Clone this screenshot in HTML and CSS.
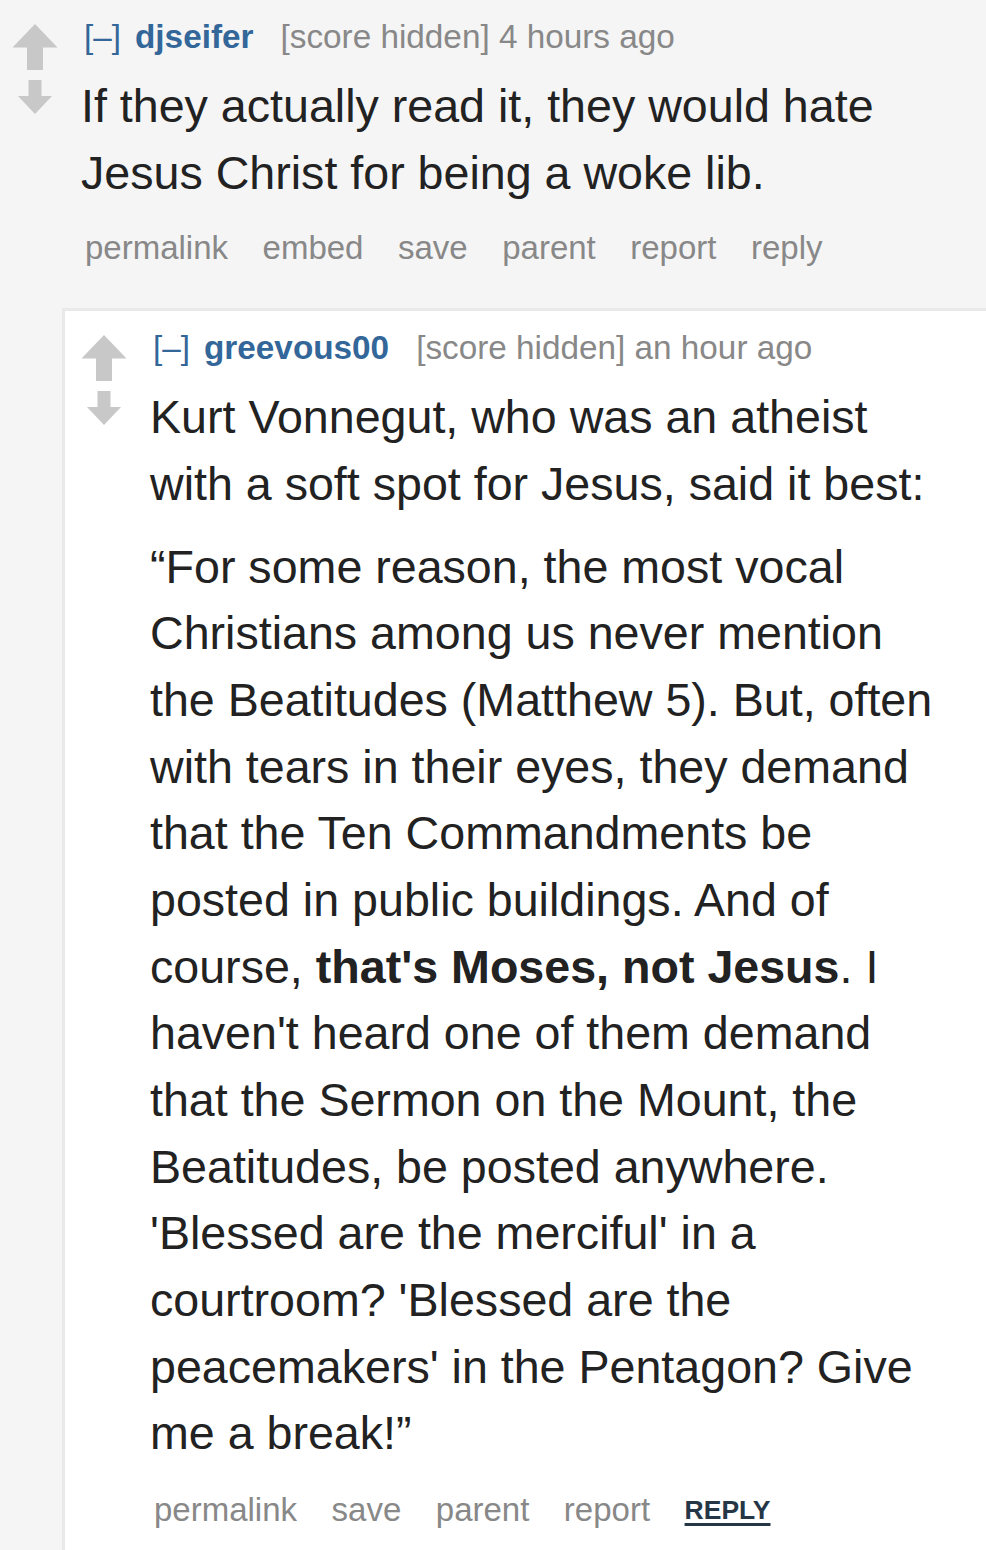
FILE: index.html
```html
<!DOCTYPE html>
<html>
<head>
<meta charset="utf-8">
<link rel="stylesheet" href="styles.css">
</head>
<body>
<div class="comment">
  <div class="row">
    <div class="midcol">
      <svg class="arrow up" width="46" height="46" viewBox="0 0 46 46"><polygon points="23,0 45.5,23.5 31,23.5 31,46 15,46 15,23.5 0.5,23.5"/></svg>
      <svg class="arrow down" width="46" height="34" viewBox="0 0 46 34"><polygon points="16.5,0 29.5,0 29.5,16 40,16 23,34 6,16 16.5,16"/></svg>
    </div>
    <div class="entry">
      <p class="tagline"><a class="expand">[–]</a><a class="author">djseifer</a><span class="score">[score hidden] 4 hours ago</span></p>
      <div class="md">
        <p>If they actually read it, they would hate Jesus Christ for being a woke lib.</p>
      </div>
      <ul class="buttons">
        <li>permalink</li><li>embed</li><li>save</li><li>parent</li><li>report</li><li>reply</li>
      </ul>
    </div>
  </div>
  <div class="child">
    <div class="comment nested">
      <div class="row">
        <div class="midcol">
          <svg class="arrow up" width="46" height="46" viewBox="0 0 46 46"><polygon points="23,0 45.5,23.5 31,23.5 31,46 15,46 15,23.5 0.5,23.5"/></svg>
          <svg class="arrow down" width="46" height="34" viewBox="0 0 46 34"><polygon points="16.5,0 29.5,0 29.5,16 40,16 23,34 6,16 16.5,16"/></svg>
        </div>
        <div class="entry">
          <p class="tagline"><a class="expand">[–]</a><a class="author">greevous00</a><span class="score">[score hidden] an hour ago</span></p>
          <div class="md">
            <p>Kurt Vonnegut, who was an atheist with a soft spot for Jesus, said it best:</p>
            <p>“For some reason, the most vocal Christians among us never mention the Beatitudes (Matthew 5). But, often with tears in their eyes, they demand that the Ten Commandments be posted in public buildings. And of course, <strong>that's Moses, not Jesus</strong>. I haven't heard one of them demand that the Sermon on the Mount, the Beatitudes, be posted anywhere. 'Blessed are the merciful' in a courtroom? 'Blessed are the peacemakers' in the Pentagon? Give me a break!”</p>
          </div>
          <ul class="buttons">
            <li>permalink</li><li>save</li><li>parent</li><li>report</li><li class="reply-btn">REPLY</li>
          </ul>
        </div>
      </div>
    </div>
  </div>
</div>
</body>
</html>
```

FILE: styles.css
```css
html, body {
  margin: 0;
  padding: 0;
  background: #f5f5f5;
  font-family: "Liberation Sans", Arial, sans-serif;
  height: 1550px;
  overflow: hidden;
}

.comment {
  padding-left: 12px;
  padding-top: 17px;
}

.row {
  display: flex;
  align-items: flex-start;
}

.midcol {
  width: 46px;
  flex: none;
  margin-top: 7px;
  display: flex;
  flex-direction: column;
  gap: 10px;
}

.arrow {
  display: block;
  fill: #c8c8c8;
}

.entry {
  margin-left: 23px;
  padding-right: 44px;
  flex: 1;
  min-width: 0;
}

.tagline {
  margin: 0;
  font-size: 33.3px;
  line-height: 40px;
  height: 40px;
  white-space: nowrap;
  padding-left: 3px;
}

.expand {
  color: #369;
  margin-right: 14px;
}

.author {
  color: #369;
  font-weight: bold;
  margin-right: 27px;
}

.score {
  color: #888;
}

.md {
  margin-top: 16px;
  font-size: 46.6px;
  line-height: 66.67px;
  color: #222;
}

.md p {
  margin: 0 0 16px 0;
}

.md p:last-child {
  margin-bottom: 0;
}

.md strong {
  font-weight: bold;
}

.buttons {
  list-style: none;
  margin: 22px 0 0 0;
  padding: 0 0 0 4px;
  display: flex;
  align-items: center;
  gap: 34.5px;
  font-size: 33px;
  line-height: 40px;
  height: 40px;
  color: #888;
}

.buttons .reply-btn {
  color: #253746;
  font-weight: bold;
  font-size: 26.5px;
  text-decoration: underline;
  text-decoration-thickness: 3px;
  text-underline-offset: 4px;
}

.child {
  margin-top: 40px;
  margin-left: 50px;
  padding-left: 4px;
  border-left: 3px solid #e9e9e9;
  border-top: 3px solid #e9e9e9;
  background: #fff;
  min-height: 1300px;
}

.nested .buttons {
  margin-top: 23px;
}
```
